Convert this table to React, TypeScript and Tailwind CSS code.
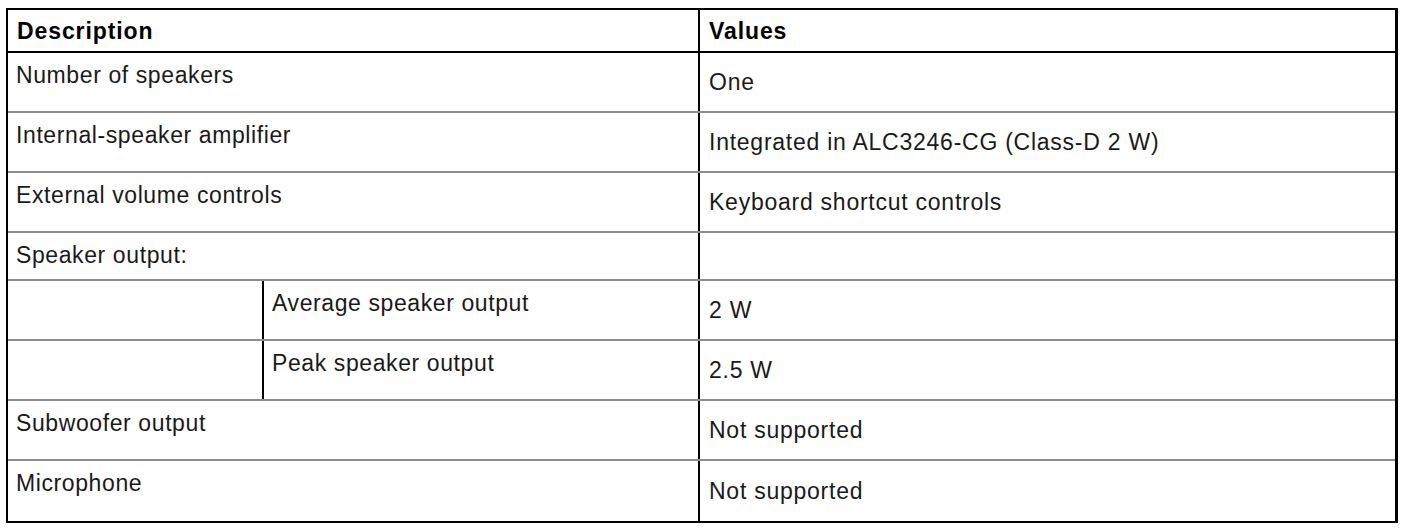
import React from 'react'

// Speaker spec table: description / values, with a nested sub-column for output rows.

type Row = {
  label: string
  value?: string
  sub?: boolean
  short?: boolean
}

const rows: Row[] = [
  { label: 'Number of speakers', value: 'One' },
  { label: 'Internal-speaker amplifier', value: 'Integrated in ALC3246-CG (Class-D 2 W)' },
  { label: 'External volume controls', value: 'Keyboard shortcut controls' },
  { label: 'Speaker output:', short: true },
  { label: 'Average speaker output', value: '2 W', sub: true },
  { label: 'Peak speaker output', value: '2.5 W', sub: true },
  { label: 'Subwoofer output', value: 'Not supported' },
  { label: 'Microphone', value: 'Not supported' },
]

function SpecRow({ row, last }: { row: Row; last: boolean }) {
  return (
    <div
      className={
        'flex ' +
        (row.short ? 'h-[48px] ' : 'h-[60px] ') +
        (last ? '' : 'border-b-2 border-[#8e8e8e]')
      }
    >
      {row.sub ? (
        <div className="flex w-[692px] border-r-2 border-black">
          <div className="w-[256px] border-r-2 border-black" />
          <div className="flex-1 pl-[8px] pt-[9px]">{row.label}</div>
        </div>
      ) : (
        <div className="w-[692px] border-r-2 border-black pl-[8px] pt-[9px]">{row.label}</div>
      )}
      <div className="flex flex-1 items-center pl-[9px] tracking-[0.75px]">{row.value}</div>
    </div>
  )
}

export default function App() {
  return (
    <div
      className="min-h-[530px] bg-white pl-[6px] pt-[8px] text-[23px] leading-[26px] tracking-[0.6px] text-[#1a1a1a]"
      style={{ fontFamily: '"Liberation Sans", Arial, sans-serif' }}
    >
      <div className="w-[1392px] border-2 border-r-[3px] border-black">
        <div className="flex h-[43px] border-b-2 border-black font-bold tracking-[0.9px] text-black">
          <div className="flex w-[692px] items-center border-r-2 border-black pl-[9px]">Description</div>
          <div className="flex flex-1 items-center pl-[9px]">Values</div>
        </div>
        {rows.map((r, i) => (
          <SpecRow key={r.label} row={r} last={i === rows.length - 1} />
        ))}
      </div>
    </div>
  )
}
